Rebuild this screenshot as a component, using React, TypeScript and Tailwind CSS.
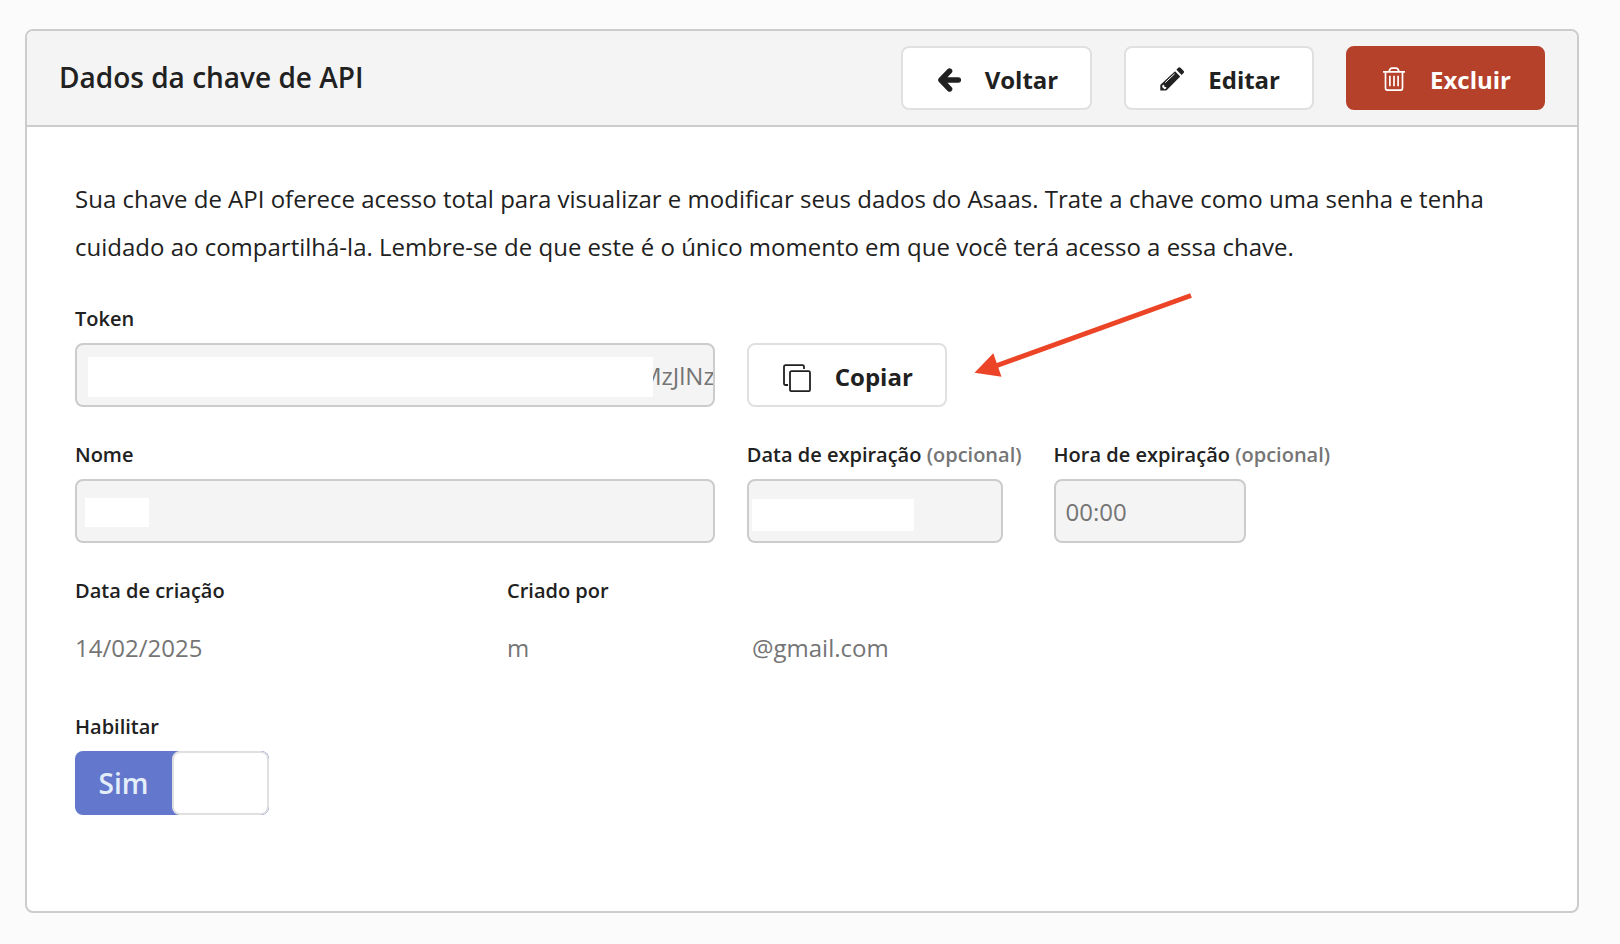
import { useState } from 'react'
import type { ReactNode } from 'react'

const inputClass =
  'block h-16 w-full rounded-lg border-2 border-[#cccccc] bg-[#f4f4f4] px-[10px] text-2xl text-[#757575] outline-none'

const buttonClass =
  'flex h-16 cursor-pointer items-center gap-6 rounded-lg border-2 pt-1 pl-[34px] pr-8 text-2xl font-bold'

function ArrowLeftIcon() {
  return (
    <svg className="size-6" viewBox="0 0 24 24" fill="none" stroke="currentColor" strokeWidth="5.4" strokeLinecap="round" strokeLinejoin="round" aria-hidden="true">
      <path d="M12.6 3 3.9 12l8.7 9M5 12h16.4" />
    </svg>
  )
}

function PencilIcon() {
  return (
    <svg className="mb-0.5 size-6" viewBox="0 0 24 24" aria-hidden="true">
      <path fill="currentColor" d="M16.4 2.7 18.2.8q1.1-1.1 2.3 0l3 3q1.1 1.1 0 2.3l-1.9 1.8z" />
      <path fill="currentColor" d="M15 4.2 20.2 9.4 7.4 22.4 6 23.6H.3v-5.7L1.8 16.6z" />
      <path fill="none" stroke="#fff" strokeWidth="1" d="M5.2 15.6 14.6 6.8" />
      <path fill="#fff" d="M2.6 17.9 4 17.7l.4 2 2 .5-.3 1.4-1.6.7-2.4-2.3z" />
    </svg>
  )
}

function TrashIcon() {
  return (
    <svg className="mb-0.5 size-6" viewBox="0 0 24 24" fill="none" stroke="currentColor" strokeWidth="1.7" strokeLinejoin="round" aria-hidden="true">
      <path d="M1 4.9h22M7 4.7l1.1-2.6q.4-1 1.5-1h4.800q1.100 0 1.500 1L17 4.700" />
      <path d="M3.500 4.900v16.300q0 2 2 2h13q2 0 2-2V4.900" />
      <path d="M7.900 8.700v10.600M12 8.700v10.600M16.100 8.700v10.600" />
    </svg>
  )
}

function CopyIcon() {
  return (
    <svg className="mt-0.5 size-7" viewBox="0 0 28 28" fill="none" stroke="currentColor" strokeWidth="1.8" aria-hidden="true">
      <rect x="7" y="7.2" width="20" height="20" rx="1.5" />
      <path d="M5 21H2.500Q1 21 1 19.500V2.700q0-1.500 1.500-1.500h17q1.500 0 1.500 1.500V5" />
    </svg>
  )
}

function PointerArrow() {
  return (
    <svg className="pointer-events-none absolute -top-[53px] left-full ml-6 h-[92px] w-56" viewBox="0 0 224 92" aria-hidden="true">
      <path d="M26 75.500 220 5.500" stroke="#ec4427" strokeWidth="5" />
      <path d="M3.500 82.700 22.300 63.300 30.500 86.700z" fill="#ec4427" />
    </svg>
  )
}

function Label({ htmlFor, optional, children }: { htmlFor?: string; optional?: boolean; children: ReactNode }) {
  return (
    <label htmlFor={htmlFor} className="mb-2 block text-xl leading-8 font-semibold whitespace-nowrap">
      {children}
      {optional && <span className="text-[#757575]"> (opcional)</span>}
    </label>
  )
}

export default function App() {
  const [enabled, setEnabled] = useState(true)

  return (
    <div className="min-h-screen bg-[#fbfbfb] pt-[29px] pr-[41px] pb-[31px] pl-[25px] font-['Open_Sans','Noto_Sans',sans-serif] text-[#212121]">
      <main className="overflow-hidden rounded-lg border-2 border-[#cccccc] bg-white">
        <header className="flex items-center justify-between border-b-2 border-[#cccccc] bg-[#f4f4f4] px-8 py-[15px]">
          <h1 className="pb-0.5 text-[28px] leading-10 font-semibold">Dados da chave de API</h1>
          <div className="flex gap-8">
            <button type="button" className={`${buttonClass} border-[#e0e0e0] bg-white`}>
              <ArrowLeftIcon />
              Voltar
            </button>
            <button type="button" className={`${buttonClass} border-[#e0e0e0] bg-white`}>
              <PencilIcon />
              Editar
            </button>
            <button type="button" className={`${buttonClass} border-[#b5412a] bg-[#b5412a] text-white`}>
              <TrashIcon />
              Excluir
            </button>
          </div>
        </header>

        <form className="space-y-8 px-12 pt-12 pb-24">
          <p className="text-2xl leading-[48px]">
            Sua chave de API oferece acesso total para visualizar e modificar seus dados do Asaas. Trate a chave como
            uma senha e tenha cuidado ao compartilhá-la. Lembre-se de que este é o único momento em que você terá
            acesso a essa chave.
          </p>

          <div className="flex items-end gap-8">
            <div className="w-[44%]">
              <Label htmlFor="token">Token</Label>
              <div className="relative">
                <input id="token" readOnly value="MzJlNz" className={`${inputClass} pr-0 pl-[88%]`} />
                <span className="absolute top-[14px] right-[62px] bottom-[10px] left-[13px] bg-white" />
              </div>
            </div>
            <div className="relative">
              <button type="button" className={`${buttonClass} border-[#e0e0e0] bg-white`}>
                <CopyIcon />
                Copiar
              </button>
              <PointerArrow />
            </div>
          </div>

          <div className="flex gap-8">
            <div className="w-[44%]">
              <Label htmlFor="nome">Nome</Label>
              <div className="relative">
                <input id="nome" readOnly className={inputClass} />
                <span className="absolute top-[19px] left-[10px] h-[29px] w-16 bg-white" />
              </div>
            </div>
            <div>
              <Label htmlFor="data" optional>Data de expiração</Label>
              <div className="relative w-64">
                <input id="data" readOnly className={inputClass} />
                <span className="absolute top-5 left-[5px] h-8 w-[162px] bg-white" />
              </div>
            </div>
            <div>
              <Label htmlFor="hora" optional>Hora de expiração</Label>
              <div className="w-48">
                <input id="hora" readOnly value="00:00" className={inputClass} />
              </div>
            </div>
          </div>

          <dl className="flex gap-8">
            <div className="w-[400px]">
              <dt className="mb-2 text-xl leading-8 font-semibold">Data de criação</dt>
              <dd className="flex h-16 items-center pt-0.5 text-2xl text-[#757575]">14/02/2025</dd>
            </div>
            <div>
              <dt className="mb-2 text-xl leading-8 font-semibold">Criado por</dt>
              <dd className="flex h-16 items-center pt-0.5 text-2xl text-[#757575]">
                <span className="w-[245px]">m</span>
                <span>@gmail.com</span>
              </dd>
            </div>
          </dl>

          <div>
            <Label htmlFor="habilitar">Habilitar</Label>
            <label className="relative flex h-16 w-[194px] cursor-pointer overflow-hidden rounded-lg bg-[#6377cc]">
              <input
                id="habilitar"
                type="checkbox"
                checked={enabled}
                onChange={e => setEnabled(e.target.checked)}
                className="sr-only"
              />
              <span className={`flex w-1/2 items-center justify-center text-[28px] font-semibold text-[#e3eefa] ${enabled ? '' : 'order-2'}`}>
                {enabled ? 'Sim' : 'Não'}
              </span>
              <span className="w-1/2 rounded-lg border-2 border-[#e0e0e0] bg-white" />
            </label>
          </div>
        </form>
      </main>
    </div>
  )
}
